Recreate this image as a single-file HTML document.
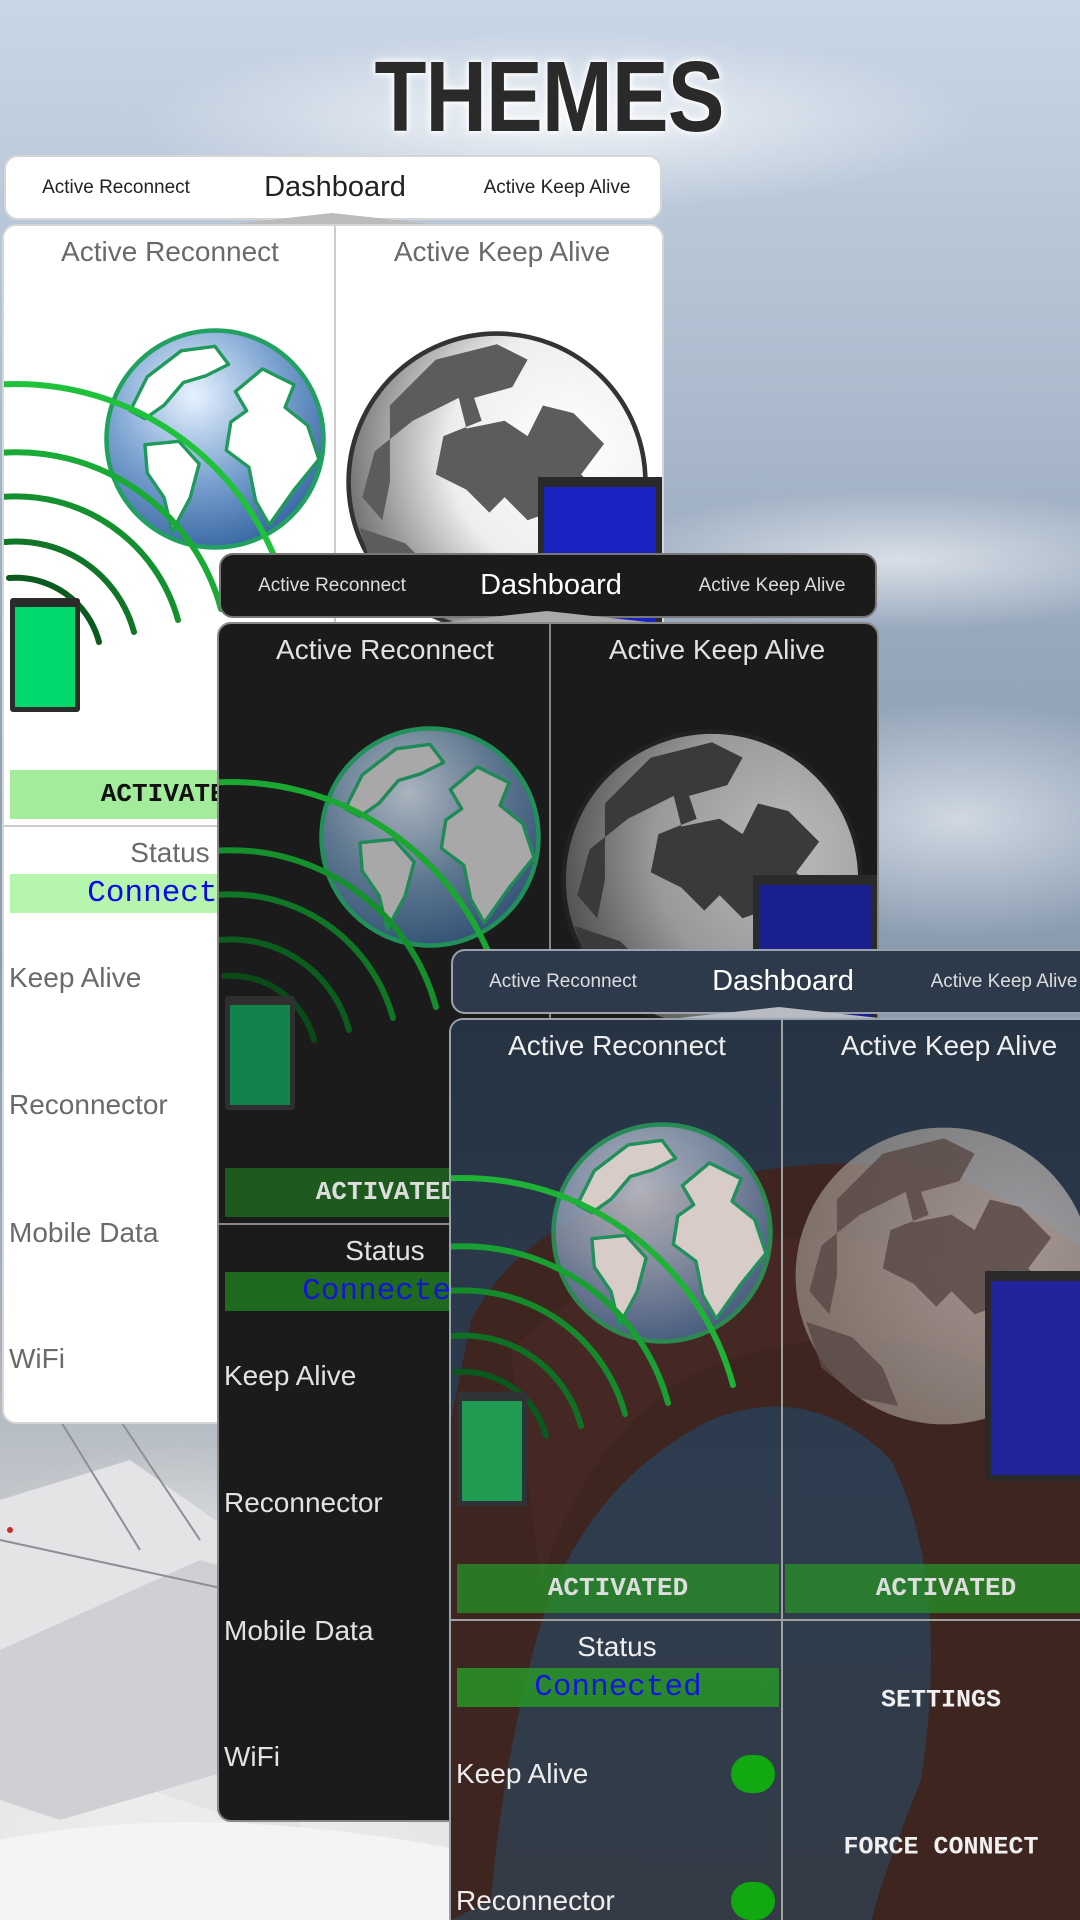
<!DOCTYPE html>
<html><head><meta charset="utf-8">
<style>
*{margin:0;padding:0;box-sizing:border-box}
html,body{width:1080px;height:1920px;overflow:hidden}
#root{position:relative;width:1080px;height:1920px;overflow:hidden;font-family:"Liberation Sans",sans-serif;
background:
radial-gradient(ellipse 420px 90px at 560px 120px,rgba(255,255,255,.75),rgba(255,255,255,0)),
radial-gradient(ellipse 300px 70px at 900px 560px,rgba(255,255,255,.6),rgba(255,255,255,0)),
radial-gradient(ellipse 260px 120px at 960px 820px,rgba(235,240,245,.7),rgba(255,255,255,0)),
radial-gradient(ellipse 300px 260px at 180px 1700px,#f2f2f2,rgba(230,230,230,0)),
linear-gradient(180deg,#c9d6e6 0%,#b4c3d4 15%,#95a6ba 35%,#8a9bb0 50%,#a9b2bc 70%,#d8d8d8 85%,#ececec 100%);}
.themes{position:absolute;left:0;width:1098px;top:40px;text-align:center;font-size:100px;font-weight:bold;letter-spacing:-1px;color:#2a2a2a;
text-shadow:0 0 6px #fff,0 0 12px #fff,0 0 3px #fff;transform:scaleX(.85);transform-origin:549px 0;}
.panel{position:absolute;width:662px;height:1270px}
.hdr{position:absolute;left:2px;top:0;width:658px;height:65px;border-radius:14px;border:2px solid #ccc}
.hdr span{position:absolute;top:0;line-height:61px;white-space:nowrap;transform:translateX(-50%)}
.hdr .s{font-size:19px}
.hdr .d{font-size:29px}
.notch{position:absolute;left:230px;top:58px;width:200px;height:11px;background:#bbb;clip-path:polygon(0 100%,50% 0,100% 100%)}
.bd{position:absolute;left:0;top:69px;width:662px;height:1200px;border-radius:14px;border:2px solid #ccc;overflow:hidden}
.in{position:absolute;left:0;top:-69px;width:662px;height:1269px}
.t{position:absolute;white-space:nowrap;transform:translate(-50%,-50%);font-size:28px}
.l{position:absolute;left:5px;font-size:28px;transform:translateY(-50%);white-space:nowrap}
.vd{position:absolute;left:330px;top:69px;width:2px;height:1200px}
.hd{position:absolute;left:0;top:668px;width:662px;height:2px}
.bar{position:absolute;font-family:"Liberation Mono",monospace;font-weight:bold;text-align:center}
.act{top:613px;height:49px;line-height:49px;font-size:26px;width:322px}
.con{left:6px;top:717px;height:39px;line-height:39px;font-size:31px;width:322px;font-weight:normal}
.ph{position:absolute;left:6px;top:441px;width:70px;height:114px;border:5px solid #333;border-top-width:9px;border-radius:3px}
.bp{position:absolute;left:534px;top:320px;width:124px;height:210px;border:6px solid #2a2a2a;border-top-width:10px;background:#1a22c0}
.pill{position:absolute;left:280px;width:44px;height:38px;border-radius:19px;background:#11a811}
.mono{position:absolute;font-family:"Liberation Mono",monospace;font-weight:bold;font-size:25px;color:#f0f0f0;transform:translate(-50%,-50%);white-space:nowrap}
.p1 .hdr{background:#fff;border-color:#d6d6d6;color:#222}
.p1 .bd{background:#fff;border-color:#d6d6d6}
.p1 .t,.p1 .l{color:#6a6a6a}
.p1 .vd,.p1 .hd{background:#ccc}
.p1 .act{background:#a3ec9c;color:#111}
.p1 .con{background:#b5f5ae;color:#0a0ae6}
.p1 .ph{background:#00d86c;border-color:#2b2b2b}
.p2 .hdr{background:#1b1b1b;border-color:#777;color:#ddd}
.p2 .hdr .d{color:#fff}
.p2 .bd{background:#1b1b1b;border-color:#888}
.p2 .t,.p2 .l{color:#e2e2e2}
.p2 .vd,.p2 .hd{background:#888}
.p2 .act{background:#1e5a1e;color:#ddd}
.p2 .con{background:#1f6a1f;color:#1515d8}
.p2 .ph{background:#12834a;border-color:#2f2f2f}
.p2 .bp{background:#1a2090}
.p3{height:971px;overflow:hidden}
.p3 .in{height:971px}
.p3 .vd{height:902px}
.p3 .hdr{background:#2c3a4b;border-color:#9aa3ad;color:#ddd}
.p3 .hdr .d{color:#fff}
.p3 .bd{background:#33465c;border-color:#9aa3ad;height:902px;border-bottom:none;border-radius:14px 14px 0 0}
.p3 .t,.p3 .l{color:#eee}
.p3 .vd,.p3 .hd{background:#a0a0a0}
.p3 .act{background:rgba(40,140,40,.8);color:#ddd}
.p3 .con{background:rgba(40,150,40,.85);color:#1515e0}
.p3 .ph{background:#1f9c52;border-color:#2f3338}
.p3 .bp{background:#22239a}
</style></head><body><div id="root">

<svg style="position:absolute;left:0;top:1420px" width="460" height="500">
<path d="M0 80 L130 40 L300 160 L300 420 L120 360 L0 300Z" fill="#e4e4e6"/>
<path d="M0 230 L200 140 L300 170 L300 330 L60 400 L0 380Z" fill="#cfd0d3"/>
<path d="M60 0 L140 130 M120 0 L200 120 M0 120 L230 170" stroke="#8d8f94" stroke-width="2" fill="none"/>
<path d="M0 420 Q200 380 460 430 L460 500 L0 500Z" fill="#f4f4f4"/>
<circle cx="10" cy="110" r="3" fill="#c03030"/>
</svg>

<div class="themes">THEMES</div>

<div class="panel p1" style="left:2px;top:155px">
 <div class="hdr"><span class="s" style="left:110px">Active Reconnect</span><span class="d" style="left:329px">Dashboard</span><span class="s" style="left:551px">Active Keep Alive</span></div>
 <div class="notch"></div>
 <div class="bd"><div class="in">
  <div class="vd"></div><div class="hd"></div>
  <div class="t" style="left:166px;top:95px">Active Reconnect</div>
  <div class="t" style="left:498px;top:95px">Active Keep Alive</div>
  <svg style="position:absolute;left:340px;top:172px" width="306" height="306" viewBox="-100 -100 200 200">
   <defs><radialGradient id="gg1" cx="75%" cy="40%" r="75%"><stop offset="0" stop-color="#fff"/><stop offset=".55" stop-color="#eee"/><stop offset="1" stop-color="#777"/></radialGradient></defs>
   <circle r="97" fill="url(#gg1)" stroke="#333" stroke-width="3"/>
   <path d="M-70,-50 L-40,-80 L0,-90 L20,-80 L10,-62 L-15,-55 L-10,-40 L-35,-30 L-40,-5 L-20,5 L-5,20 L5,10 L20,25 L40,18 L60,30 L70,10 L55,-5 L70,-25 L50,-45 L30,-50 L20,-30 L5,-40 L-20,-35 L-25,-55 L-55,-40 L-80,-20 L-88,10 L-75,25 L-70,0 Z M-90,30 L-60,40 L-40,60 L-30,85 L-55,80 L-80,60Z" fill="#5c5c5c"/>
  </svg>
  <div class="bp"></div>
  <svg style="position:absolute;left:98px;top:169px" width="226" height="226" viewBox="-100 -100 200 200">
   <defs><radialGradient id="gb1" cx="40%" cy="30%" r="80%"><stop offset="0" stop-color="#e8f2ff"/><stop offset=".5" stop-color="#7aa2d0"/><stop offset="1" stop-color="#2a5a98"/></radialGradient></defs>
   <circle r="96" fill="url(#gb1)" stroke="#21a060" stroke-width="4"/>
   <g fill="#fff" stroke="#1f9a5a" stroke-width="3" stroke-linejoin="round">
   <path d="M-60,-55 L-30,-78 L0,-82 L12,-66 L-8,-56 L-28,-50 L-45,-30 L-62,-18 L-75,-25 Z"/>
   <path d="M-62,5 L-32,2 L-14,22 L-22,52 L-38,82 L-45,52 L-60,30 Z"/>
   <path d="M18,-42 L42,-62 L70,-48 L62,-28 L82,-12 L92,18 L70,45 L48,76 L36,55 L30,25 L10,10 L14,-15 L28,-25 Z"/>
   </g>
  </svg>
  <svg style="position:absolute;left:0;top:0" width="662" height="669" viewBox="0 0 662 669" fill="none" stroke-linecap="round">
   <path d="M-12,228 A280 280 0 0 1 282,434" stroke="#20c23c" stroke-width="6"/>
   <path d="M-6,296 A212 212 0 0 1 217,452" stroke="#1aaa36" stroke-width="6"/>
   <path d="M-3,340 A168 168 0 0 1 174,463" stroke="#15902e" stroke-width="6"/>
   <path d="M1,385 A122 122 0 0 1 130,475" stroke="#107526" stroke-width="6"/>
   <path d="M5,421 A86 86 0 0 1 95,485" stroke="#0b5a1e" stroke-width="6"/>
  </svg>
  <div class="ph"></div>
  <div class="bar act" style="left:6px">ACTIVATED</div>
  <div class="bar act" style="left:334px">ACTIVATED</div>
  <div class="t" style="left:166px;top:696px">Status</div>
  <div class="bar con">Connected</div>
  <div class="l" style="top:821px">Keep Alive</div>
  <div class="l" style="top:948px">Reconnector</div>
  <div class="l" style="top:1076px">Mobile Data</div>
  <div class="l" style="top:1202px">WiFi</div>
 </div></div>
</div>

<div class="panel p2" style="left:217px;top:553px">
 <div class="hdr"><span class="s" style="left:111px">Active Reconnect</span><span class="d" style="left:330px">Dashboard</span><span class="s" style="left:551px">Active Keep Alive</span></div>
 <div class="notch" style="background:#aaa"></div>
 <div class="bd"><div class="in">
  <div class="vd"></div><div class="hd"></div>
  <div class="t" style="left:166px;top:95px">Active Reconnect</div>
  <div class="t" style="left:498px;top:95px">Active Keep Alive</div>
  <svg style="position:absolute;left:340px;top:172px" width="306" height="306" viewBox="-100 -100 200 200">
   <defs><radialGradient id="gg2" cx="75%" cy="40%" r="75%"><stop offset="0" stop-color="#bbb"/><stop offset=".6" stop-color="#999"/><stop offset="1" stop-color="#555"/></radialGradient></defs>
   <circle r="97" fill="url(#gg2)" stroke="#222" stroke-width="3"/>
   <path d="M-70,-50 L-40,-80 L0,-90 L20,-80 L10,-62 L-15,-55 L-10,-40 L-35,-30 L-40,-5 L-20,5 L-5,20 L5,10 L20,25 L40,18 L60,30 L70,10 L55,-5 L70,-25 L50,-45 L30,-50 L20,-30 L5,-40 L-20,-35 L-25,-55 L-55,-40 L-80,-20 L-88,10 L-75,25 L-70,0 Z M-90,30 L-60,40 L-40,60 L-30,85 L-55,80 L-80,60Z" fill="#3a3a3a"/>
  </svg>
  <div class="bp"></div>
  <svg style="position:absolute;left:98px;top:169px" width="226" height="226" viewBox="-100 -100 200 200">
   <defs><radialGradient id="gb2" cx="40%" cy="30%" r="80%"><stop offset="0" stop-color="#aab4be"/><stop offset=".5" stop-color="#5f7890"/><stop offset="1" stop-color="#2a4a70"/></radialGradient></defs>
   <circle r="96" fill="url(#gb2)" stroke="#21905a" stroke-width="4"/>
   <g fill="#a8a8a8" stroke="#1f8a55" stroke-width="3" stroke-linejoin="round">
   <path d="M-60,-55 L-30,-78 L0,-82 L12,-66 L-8,-56 L-28,-50 L-45,-30 L-62,-18 L-75,-25 Z"/>
   <path d="M-62,5 L-32,2 L-14,22 L-22,52 L-38,82 L-45,52 L-60,30 Z"/>
   <path d="M18,-42 L42,-62 L70,-48 L62,-28 L82,-12 L92,18 L70,45 L48,76 L36,55 L30,25 L10,10 L14,-15 L28,-25 Z"/>
   </g>
  </svg>
  <svg style="position:absolute;left:0;top:0" width="662" height="669" viewBox="0 0 662 669" fill="none" stroke-linecap="round">
   <path d="M-12,228 A280 280 0 0 1 282,434" stroke="#1aa832" stroke-width="6"/>
   <path d="M-6,296 A212 212 0 0 1 217,452" stroke="#16902c" stroke-width="6"/>
   <path d="M-3,340 A168 168 0 0 1 174,463" stroke="#117526" stroke-width="6"/>
   <path d="M1,385 A122 122 0 0 1 130,475" stroke="#0c5c1e" stroke-width="6"/>
   <path d="M5,421 A86 86 0 0 1 95,485" stroke="#0a4a18" stroke-width="6"/>
  </svg>
  <div class="ph"></div>
  <div class="bar act" style="left:6px">ACTIVATED</div>
  <div class="bar act" style="left:334px">ACTIVATED</div>
  <div class="t" style="left:166px;top:696px">Status</div>
  <div class="bar con">Connected</div>
  <div class="l" style="top:821px">Keep Alive</div>
  <div class="l" style="top:948px">Reconnector</div>
  <div class="l" style="top:1076px">Mobile Data</div>
  <div class="l" style="top:1202px">WiFi</div>
 </div></div>
</div>

<div class="panel p3" style="left:449px;top:949px">
 <div class="hdr"><span class="s" style="left:110px">Active Reconnect</span><span class="d" style="left:330px">Dashboard</span><span class="s" style="left:551px">Active Keep Alive</span></div>
 <div class="notch" style="background:#b8bcc2"></div>
 <div class="bd"><div class="in">
  <svg style="position:absolute;left:0;top:69px" width="662" height="902" viewBox="0 0 662 902">
   <defs><linearGradient id="sky3" x1="0" y1="0" x2="0" y2="1"><stop offset="0" stop-color="#2c3b4d"/><stop offset=".5" stop-color="#35465a"/><stop offset="1" stop-color="#3d4550"/></linearGradient></defs>
   <rect width="662" height="902" fill="url(#sky3)"/>
   <path d="M20,300 Q80,190 220,170 Q360,130 480,150 Q600,190 662,260 L662,902 L420,902 Q430,860 470,760 Q500,560 440,440 Q360,360 260,400 Q120,470 80,640 Q50,760 40,880 L0,900 L0,400Z" fill="#4a2a22"/>
   <path d="M60,330 Q160,230 300,220 Q440,210 530,260 Q600,320 620,420 Q560,340 450,320 Q330,310 230,360 Q130,430 90,560Z" fill="#55302a" opacity=".7"/>
   <rect width="662" height="902" fill="rgba(10,15,25,.18)"/>
  </svg>
  <div class="vd"></div><div class="hd"></div>
  <div class="t" style="left:166px;top:95px">Active Reconnect</div>
  <div class="t" style="left:498px;top:95px">Active Keep Alive</div>
  <svg style="position:absolute;left:340px;top:172px" width="306" height="306" viewBox="-100 -100 200 200">
   <defs><radialGradient id="gg3" cx="75%" cy="40%" r="75%"><stop offset="0" stop-color="#d8d0cc"/><stop offset="1" stop-color="#a09890"/></radialGradient></defs>
   <circle r="97" fill="url(#gg3)" opacity=".65"/>
   <path d="M-70,-50 L-40,-80 L0,-90 L20,-80 L10,-62 L-15,-55 L-10,-40 L-35,-30 L-40,-5 L-20,5 L-5,20 L5,10 L20,25 L40,18 L60,30 L70,10 L55,-5 L70,-25 L50,-45 L30,-50 L20,-30 L5,-40 L-20,-35 L-25,-55 L-55,-40 L-80,-20 L-88,10 L-75,25 L-70,0 Z M-90,30 L-60,40 L-40,60 L-30,85 L-55,80 L-80,60Z" fill="#5a4a46" opacity=".85"/>
  </svg>
  <div class="bp"></div>
  <svg style="position:absolute;left:98px;top:169px" width="226" height="226" viewBox="-100 -100 200 200">
   <defs><radialGradient id="gb3" cx="40%" cy="30%" r="80%"><stop offset="0" stop-color="#c8c8d0"/><stop offset=".5" stop-color="#8898b0"/><stop offset="1" stop-color="#3a5a88"/></radialGradient></defs>
   <circle r="96" fill="url(#gb3)" stroke="#2a9a5a" stroke-width="4" opacity=".85"/>
   <g fill="#d8ccc8" stroke="#22905a" stroke-width="3" stroke-linejoin="round">
   <path d="M-60,-55 L-30,-78 L0,-82 L12,-66 L-8,-56 L-28,-50 L-45,-30 L-62,-18 L-75,-25 Z"/>
   <path d="M-62,5 L-32,2 L-14,22 L-22,52 L-38,82 L-45,52 L-60,30 Z"/>
   <path d="M18,-42 L42,-62 L70,-48 L62,-28 L82,-12 L92,18 L70,45 L48,76 L36,55 L30,25 L10,10 L14,-15 L28,-25 Z"/>
   </g>
  </svg>
  <svg style="position:absolute;left:0;top:0" width="662" height="669" viewBox="0 0 662 669" fill="none" stroke-linecap="round">
   <path d="M-12,228 A280 280 0 0 1 282,434" stroke="#1eb236" stroke-width="6"/>
   <path d="M-6,296 A212 212 0 0 1 217,452" stroke="#19a032" stroke-width="6"/>
   <path d="M-3,340 A168 168 0 0 1 174,463" stroke="#148a2b" stroke-width="6"/>
   <path d="M1,385 A122 122 0 0 1 130,475" stroke="#0f7024" stroke-width="6"/>
   <path d="M5,421 A86 86 0 0 1 95,485" stroke="#0b581e" stroke-width="6"/>
  </svg>
  <div class="ph"></div>
  <div class="bar act" style="left:6px">ACTIVATED</div>
  <div class="bar act" style="left:334px">ACTIVATED</div>
  <div class="t" style="left:166px;top:696px">Status</div>
  <div class="bar con">Connected</div>
  <div class="mono" style="left:490px;top:749px">SETTINGS</div>
  <div class="mono" style="left:490px;top:896px">FORCE CONNECT</div>
  <div class="l" style="top:823px">Keep Alive</div>
  <div class="pill" style="top:804px"></div>
  <div class="l" style="top:950px">Reconnector</div>
  <div class="pill" style="top:931px"></div>
 </div></div>
</div>

</div></body></html>
